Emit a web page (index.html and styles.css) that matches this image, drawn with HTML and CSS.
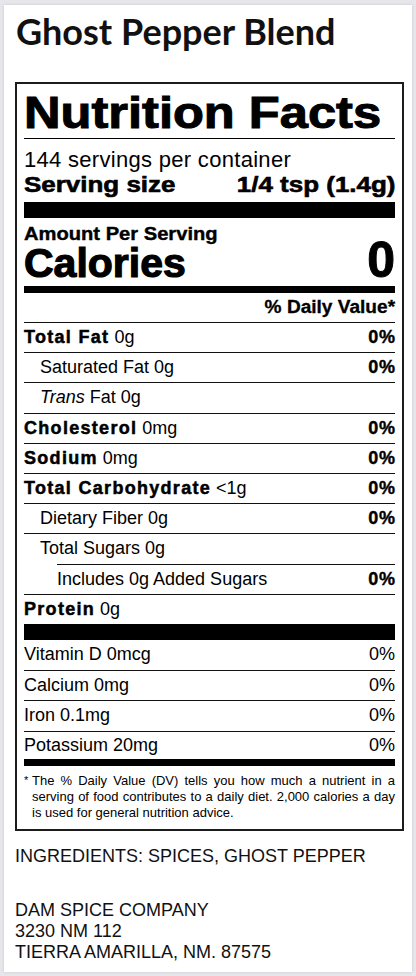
FILE: index.html
```html
<!DOCTYPE html>
<html lang="en">
<head>
<meta charset="utf-8">
<title>Ghost Pepper Blend</title>
<link rel="stylesheet" href="styles.css">
</head>
<body>
<main class="card">
  <h1 class="title">Ghost Pepper Blend</h1>
  <section class="nf">
    <header class="nf-head"><span class="nf-title">Nutrition Facts</span></header>
    <p class="servings">144 servings per container</p>
    <div class="serving-size"><span class="ss-label">Serving size</span><span class="ss-value">1/4 tsp (1.4g)</span></div>
    <div class="bar bar-thick"></div>
    <p class="amount"><span class="amount-text">Amount Per Serving</span></p>
    <div class="calories"><span class="cal-label">Calories</span><span class="cal-value">0</span></div>
    <div class="bar bar-med"></div>
    <p class="dv-head"><span class="dv-text">% Daily Value*</span></p>

    <div class="row"><span><b class="nut">Total Fat</b> 0g</span><b class="pct">0%</b></div>
    <div class="row indent"><span>Saturated Fat 0g</span><b class="pct">0%</b></div>
    <div class="row indent"><span><i>Trans</i> Fat 0g</span></div>
    <div class="row"><span><b class="nut">Cholesterol</b> 0mg</span><b class="pct">0%</b></div>
    <div class="row"><span><b class="nut">Sodium</b> 0mg</span><b class="pct">0%</b></div>
    <div class="row"><span><b class="nut">Total Carbohydrate</b> &lt;1g</span><b class="pct">0%</b></div>
    <div class="row indent"><span>Dietary Fiber 0g</span><b class="pct">0%</b></div>
    <div class="row indent"><span>Total Sugars 0g</span></div>
    <div class="row indent2"><span>Includes 0g Added Sugars</span><b class="pct">0%</b></div>
    <div class="row"><span><b class="nut">Protein</b> 0g</span></div>

    <div class="bar bar-thick"></div>

    <div class="vrow vfirst"><span>Vitamin D 0mcg</span><span>0%</span></div>
    <div class="vrow"><span>Calcium 0mg</span><span>0%</span></div>
    <div class="vrow"><span>Iron 0.1mg</span><span>0%</span></div>
    <div class="vrow vlast"><span>Potassium 20mg</span><span>0%</span></div>

    <div class="bar bar-med"></div>

    <p class="footnote"><span class="ast">*</span>The % Daily Value (DV) tells you how much a nutrient in a serving of food contributes to a daily diet. 2,000 calories a day is used for general nutrition advice.</p>
  </section>

  <p class="ingredients">INGREDIENTS: SPICES, GHOST PEPPER</p>
  <address class="maker">DAM SPICE COMPANY<br>3230 NM 112<br>TIERRA AMARILLA, NM. 87575</address>
</main>
</body>
</html>
```
FILE: styles.css
```css
* { box-sizing: border-box; }

html, body {
  margin: 0;
  padding: 0;
  background: #e6e6eb;
}

.card {
  margin: 5px 4px;
  width: 408px;
  background: #fff;
  padding: 6px 0 9px 11px;
  box-shadow: 0 0 3px rgba(0, 0, 0, 0.12);
}

.title {
  margin: 0 0 31px 1px;
  font-family: Lato, "Open Sans", sans-serif;
  font-weight: 700;
  font-size: 36px;
  line-height: 40px;
  color: #111;
}

.nf {
  width: 389px;
  border: 2px solid #1c1c1c;
  padding: 0 7px 8px;
  font-family: "Liberation Sans", Arial, sans-serif;
  color: #000;
}

.nf p { margin: 0; }

.nf-head {
  padding-top: 4px;
  height: 55px;
  border-bottom: 1px solid #000;
  line-height: 50px;
  font-size: 44px;
  font-weight: 700;
}

.nf-title {
  display: inline-block;
  transform: scaleX(1.15);
  transform-origin: left center;
  -webkit-text-stroke: 1px #000;
}

.servings {
  padding-top: 8px;
  font-size: 22px;
  line-height: 25px;
  letter-spacing: 0.3px;
}

.serving-size {
  display: flex;
  justify-content: space-between;
  font-size: 22px;
  line-height: 25px;
  font-weight: 700;
}

.ss-label, .ss-value {
  display: inline-block;
  transform: scaleX(1.18);
  -webkit-text-stroke: 0.6px #000;
}
.ss-label { transform-origin: left center; }
.ss-value { transform-origin: right center; }

.bar { background: #000; }
.bar-thick { height: 16px; margin-top: 5px; }
.bar-med { height: 7px; margin-top: 3px; }

.amount {
  margin-top: 7px !important;
  font-size: 19px;
  line-height: 18px;
  font-weight: 700;
}
.amount-text {
  display: inline-block;
  transform: scaleX(1.06);
  transform-origin: left center;
  -webkit-text-stroke: 0.4px #000;
}

.calories {
  display: flex;
  justify-content: space-between;
  align-items: flex-start;
  height: 40px;
  font-weight: 700;
}
.cal-label {
  font-size: 41px;
  line-height: 40px;
  -webkit-text-stroke: 1.2px #000;
}
.cal-value {
  font-size: 50px;
  line-height: 35px;
  -webkit-text-stroke: 1px #000;
}

.dv-head {
  text-align: right;
  font-size: 18px;
  line-height: 29px;
  font-weight: 700;
}
.dv-text {
  display: inline-block;
  transform: scaleX(1.06);
  transform-origin: right center;
  -webkit-text-stroke: 0.3px #000;
}

.row {
  display: flex;
  justify-content: space-between;
  border-top: 1px solid #111;
  font-size: 18px;
  line-height: 29.2px;
}
.row.indent { padding-left: 16px; }
.row.indent2 { margin-left: 33px; }

.nut {
  letter-spacing: 1.3px;
  -webkit-text-stroke: 0.5px #000;
}
.pct {
  letter-spacing: 0.8px;
  margin-right: -0.8px;
  -webkit-text-stroke: 0.4px #000;
}
.row i { font-style: italic; }

.vrow {
  display: flex;
  justify-content: space-between;
  border-top: 1px solid #111;
  font-size: 18px;
  line-height: 29.5px;
}
.vrow.vfirst { border-top: 0; }
.vrow.vlast { line-height: 27px; }

.row + .bar-thick { margin-top: 0; }
.vrow + .bar-med { margin-top: 0; }

.footnote {
  padding: 7px 0 0 8px;
  text-indent: -8px;
  text-align: justify;
  font-size: 13px;
  line-height: 16px;
}
.ast {
  display: inline-block;
  width: 8px;
  text-indent: 0;
  font-size: 11px;
  vertical-align: top;
  line-height: 14px;
}

.ingredients, .maker {
  margin: 0;
  font-family: "Liberation Sans", Arial, sans-serif;
  font-style: normal;
  font-size: 18px;
  line-height: 21px;
  color: #111;
}
.ingredients { margin-top: 15px; }
.maker { margin-top: 33px; }
```
